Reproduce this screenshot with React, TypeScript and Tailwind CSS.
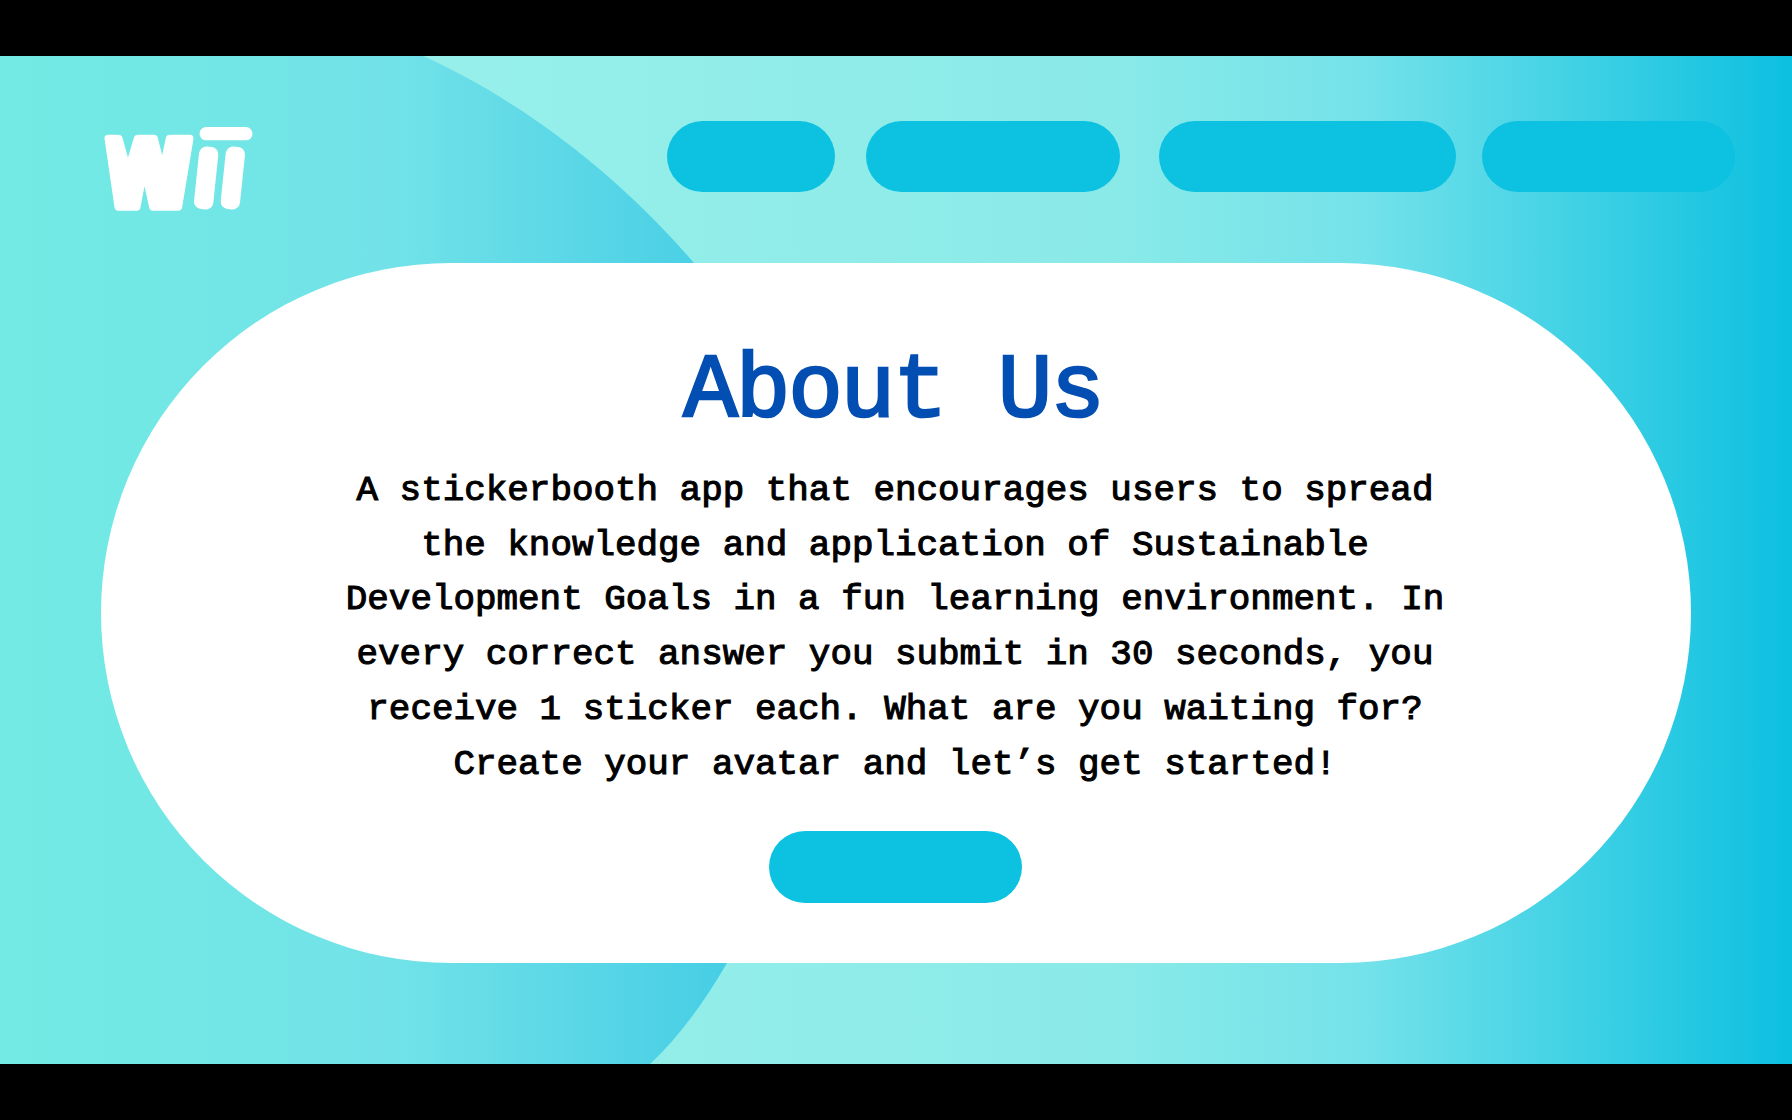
const lines = [
  "A stickerbooth app that encourages users to spread",
  "the knowledge and application of Sustainable",
  "Development Goals in a fun learning environment. In",
  "every correct answer you submit in 30 seconds, you",
  "receive 1 sticker each. What are you waiting for?",
  "Create your avatar and let’s get started!",
];

const Logo = () => (
  <svg viewBox="60 70 470 270" className="w-[157px] h-[90px] shrink-0 -ml-[1px]" fill="#fff">
    <path
      d="M84 116 H116 L143 215 L172 116 H222 L247 215 L268 116 H329 L295 322 H218 L192 205 L170 322 H114 Z"
      stroke="#fff"
      strokeWidth="22"
      strokeLinejoin="round"
    />
    <rect x="358" y="82" width="159" height="40" rx="20" />
    <rect x="349" y="141" width="58" height="188" rx="22" transform="rotate(6 378 235)" />
    <rect x="429" y="141" width="58" height="188" rx="22" transform="rotate(6 458 235)" />
  </svg>
);

const Pill = ({ className }: { className: string }) => (
  <button className={`h-[71px] rounded-[36px] bg-[#0dc1e1] shrink-0 ${className}`} />
);

const App = () => {
  return (
    <div className="w-[1792px] h-[1120px] bg-black py-[56px] overflow-hidden">
      <div className="relative w-full h-[1008px] bg-[linear-gradient(90deg,#96efea_28%,#8aeae8_62%,#74e2ea_76%,#0cc0e0_100%)] overflow-hidden">
        <svg viewBox="0 0 800 1008" className="absolute left-0 top-0 w-[800px] h-[1008px]">
          <defs>
            <linearGradient id="blob" x1="0" x2="1" y1="0" y2="0">
              <stop offset="0" stopColor="#72ebe3" />
              <stop offset="0.5" stopColor="#72e2e8" />
              <stop offset="1" stopColor="#40cbe5" />
            </linearGradient>
          </defs>
          <path
            d="M0 0 H423 C510 39 610 109 694 207 C800 400 800 750 727 907 C705 945 680 980 650 1008 H0 Z"
            fill="url(#blob)"
          />
        </svg>

        <div className="relative flex flex-col pt-[65px] pl-[101px]">
          <div className="flex h-[71px]">
            <div className="w-[566px] shrink-0 pt-[2px]">
              <Logo />
            </div>
            <Pill className="w-[168px]" />
            <Pill className="w-[254px] ml-[31px]" />
            <Pill className="w-[297px] ml-[39px]" />
            <Pill className="w-[253px] ml-[26px]" />
          </div>

          <div className="flex flex-col items-center w-[1590px] h-[700px] mt-[71px] bg-white rounded-[350px] pt-[79px]">
            <h1 className="-ml-[6px] font-['Liberation_Mono',monospace] text-[91px] tracking-[-2.2px] leading-[100px] text-[#034eb2] [-webkit-text-stroke:2.6px_#034eb2]">
              About Us
            </h1>
            <div className="mt-[22px] -ml-[2px] font-['Liberation_Mono',monospace] text-[35.9px] leading-[54.7px] text-black text-center [-webkit-text-stroke:1.1px_#000]">
              {lines.map((line) => (
                <p key={line} className="whitespace-pre">
                  {line}
                </p>
              ))}
            </div>
            <button className="mt-[39px] -ml-[2px] w-[253px] h-[72px] rounded-[36px] bg-[#0dc1e1]" />
          </div>
        </div>
      </div>
    </div>
  );
};

export default App;
